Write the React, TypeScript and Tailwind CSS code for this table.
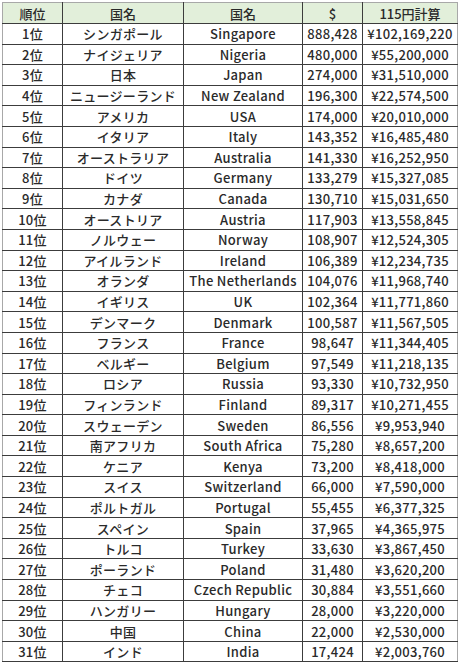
const rows: [string, string, string, string, string][] = [
  ['1位', 'シンガポール', 'Singapore', '888,428', '¥102,169,220'],
  ['2位', 'ナイジェリア', 'Nigeria', '480,000', '¥55,200,000'],
  ['3位', '日本', 'Japan', '274,000', '¥31,510,000'],
  ['4位', 'ニュージーランド', 'New Zealand', '196,300', '¥22,574,500'],
  ['5位', 'アメリカ', 'USA', '174,000', '¥20,010,000'],
  ['6位', 'イタリア', 'Italy', '143,352', '¥16,485,480'],
  ['7位', 'オーストラリア', 'Australia', '141,330', '¥16,252,950'],
  ['8位', 'ドイツ', 'Germany', '133,279', '¥15,327,085'],
  ['9位', 'カナダ', 'Canada', '130,710', '¥15,031,650'],
  ['10位', 'オーストリア', 'Austria', '117,903', '¥13,558,845'],
  ['11位', 'ノルウェー', 'Norway', '108,907', '¥12,524,305'],
  ['12位', 'アイルランド', 'Ireland', '106,389', '¥12,234,735'],
  ['13位', 'オランダ', 'The Netherlands', '104,076', '¥11,968,740'],
  ['14位', 'イギリス', 'UK', '102,364', '¥11,771,860'],
  ['15位', 'デンマーク', 'Denmark', '100,587', '¥11,567,505'],
  ['16位', 'フランス', 'France', '98,647', '¥11,344,405'],
  ['17位', 'ベルギー', 'Belgium', '97,549', '¥11,218,135'],
  ['18位', 'ロシア', 'Russia', '93,330', '¥10,732,950'],
  ['19位', 'フィンランド', 'Finland', '89,317', '¥10,271,455'],
  ['20位', 'スウェーデン', 'Sweden', '86,556', '¥9,953,940'],
  ['21位', '南アフリカ', 'South Africa', '75,280', '¥8,657,200'],
  ['22位', 'ケニア', 'Kenya', '73,200', '¥8,418,000'],
  ['23位', 'スイス', 'Switzerland', '66,000', '¥7,590,000'],
  ['24位', 'ポルトガル', 'Portugal', '55,455', '¥6,377,325'],
  ['25位', 'スペイン', 'Spain', '37,965', '¥4,365,975'],
  ['26位', 'トルコ', 'Turkey', '33,630', '¥3,867,450'],
  ['27位', 'ポーランド', 'Poland', '31,480', '¥3,620,200'],
  ['28位', 'チェコ', 'Czech Republic', '30,884', '¥3,551,660'],
  ['29位', 'ハンガリー', 'Hungary', '28,000', '¥3,220,000'],
  ['30位', '中国', 'China', '22,000', '¥2,530,000'],
  ['31位', 'インド', 'India', '17,424', '¥2,003,760'],
];

const headers = ['順位', '国名', '国名', '$', '115円計算'];

export default function App() {
  return (
    <div className="h-[666px] w-[460px] bg-white pl-[2px] pt-[2px] font-['Noto_Sans_CJK_JP',sans-serif] text-[13px] font-medium text-[#2a2a2a]">
      <table className="table-fixed border-collapse border border-[#a8a8a8]">
        <colgroup>
          <col className="w-[60px]" />
          <col className="w-[121px]" />
          <col className="w-[119px]" />
          <col className="w-[60px]" />
          <col className="w-[95px]" />
        </colgroup>
        <thead>
          <tr className="h-[21px] bg-[#e2efda]">
            {headers.map((h, i) => (
              <th
                key={i}
                className="border-x border-b border-[#3c3c3c] p-0 text-center font-medium leading-none first:border-l-[#a8a8a8] last:border-r-[#a8a8a8]"
              >
                {h}
              </th>
            ))}
          </tr>
        </thead>
        <tbody>
          {rows.map((r) => (
            <tr key={r[0]} className="h-[20.6px]">
              {r.map((c, i) => (
                <td
                  key={i}
                  className="whitespace-nowrap border border-[#3c3c3c] p-0 text-center leading-none tracking-[0.3px] first:border-l-[#a8a8a8] last:border-r-[#a8a8a8]"
                >
                  {c}
                </td>
              ))}
            </tr>
          ))}
        </tbody>
      </table>
    </div>
  );
}
